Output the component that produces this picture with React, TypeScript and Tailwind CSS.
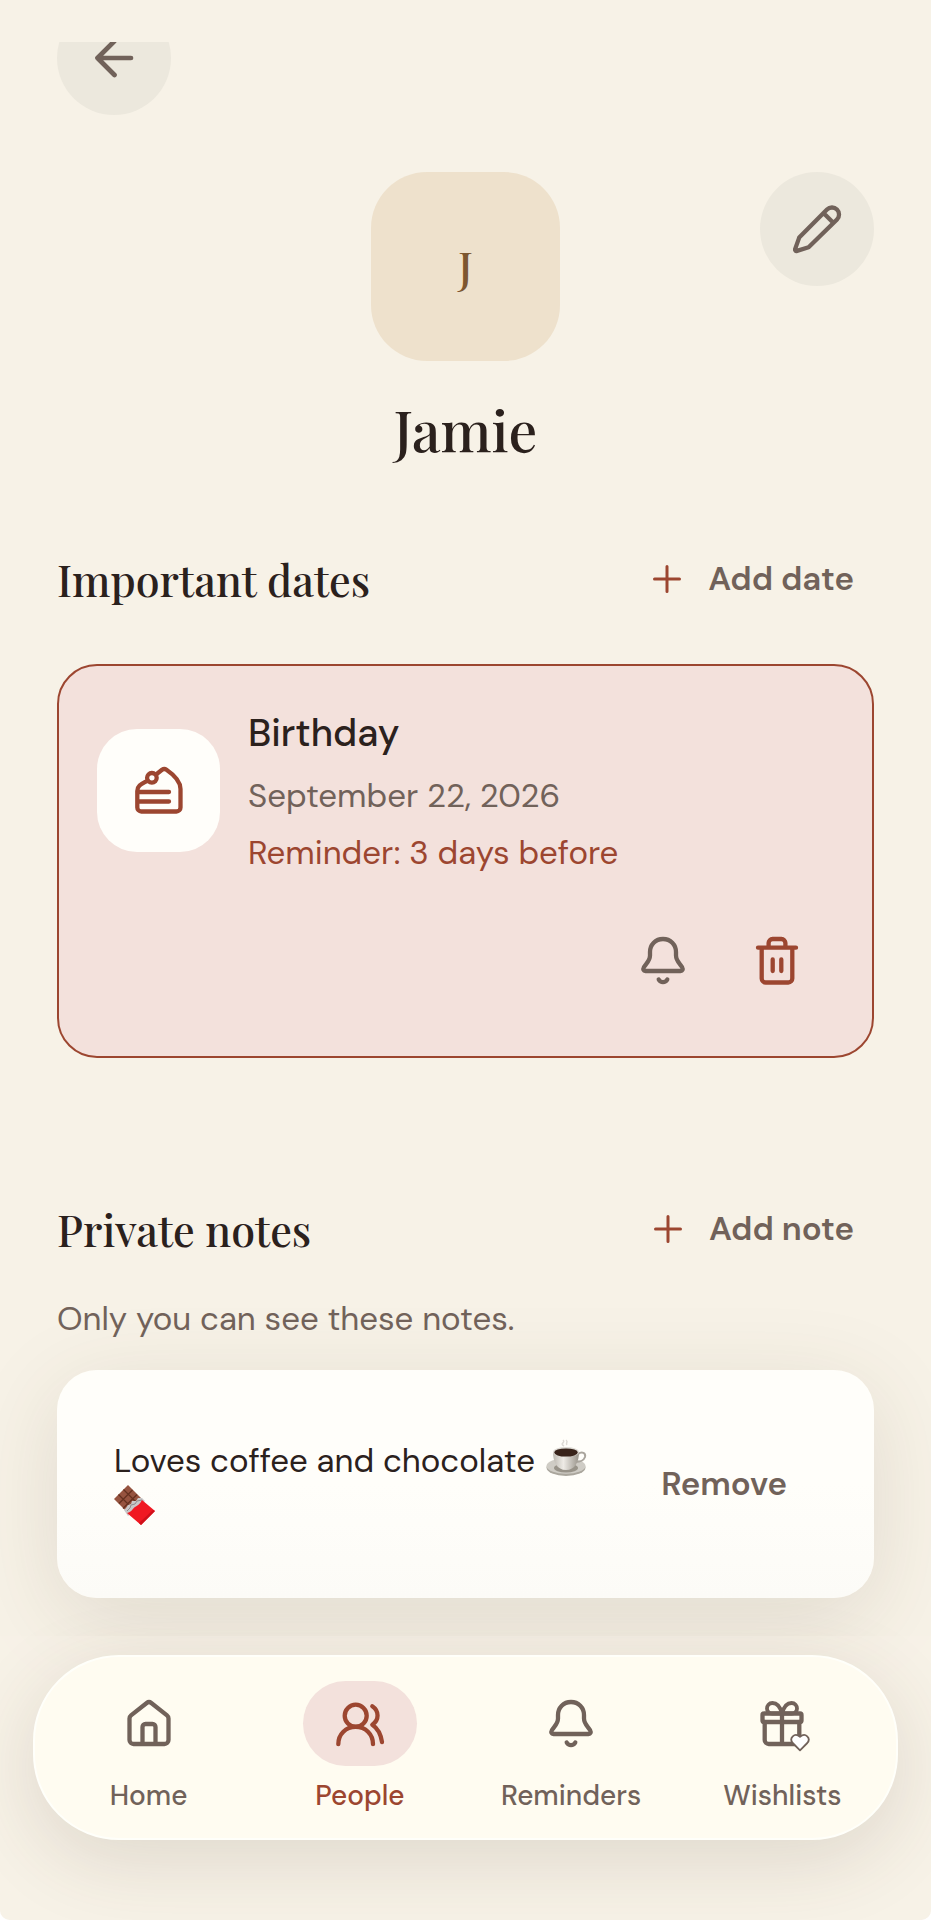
import { useState } from "react";
import type { ReactNode } from "react";

interface Note {
  id: number;
  text: string;
}

function Icon({ children }: { children: ReactNode }) {
  return (
    <svg
      viewBox="0 0 52 52"
      fill="none"
      stroke="currentColor"
      strokeWidth="4.3"
      strokeLinecap="round"
      strokeLinejoin="round"
      className="size-[52px] shrink-0 overflow-visible"
      aria-hidden="true"
    >
      {children}
    </svg>
  );
}

const BackIcon = () => (
  <Icon>
    <path d="M43 26H9.5M26.5 9 9.5 26l17 17" strokeWidth="4.7" />
  </Icon>
);

const PencilIcon = () => (
  <Icon>
    <path d="M8.2 34.6 36 6.6a7 7 0 0 1 10 9.9L17.6 44.2 6 47.9c-1.3.4-2.2-.5-1.9-1.8ZM33.5 11l8 8" />
  </Icon>
);

const CakeIcon = () => (
  <Icon>
    <path d="M14.6 16.6C9.5 19.6 4.3 21 4.3 27v16.5a4 4 0 0 0 4 4h35.2a4 4 0 0 0 4-4V25c0-8.5-7-14.5-14-19.3-1.5-1-3-1-4.5.1L23.1 10.5M5 28h31M5 37.5h31" />
    <circle cx="18.9" cy="13.8" r="4.8" />
  </Icon>
);

const BellIcon = () => (
  <Icon>
    <path d="M26 4C18.5 4 13 9.5 13 17v3.5C13 26 8.7 29 7 32c-1.3 2.5-.5 4 1.5 4h35c2 0 2.8-1.5 1.5-4-1.7-3-6-6-6-11.5V17C39 9.5 33.5 4 26 4ZM21.7 44.5c2 3.6 6.6 3.6 8.6 0" />
  </Icon>
);

const TrashIcon = () => (
  <Icon>
    <path d="M7 12.7h38M17.6 12.7V8a4 4 0 0 1 4-4h8.8a4 4 0 0 1 4 4v4.7M10.7 13v30.5a4 4 0 0 0 4 4h22.6a4 4 0 0 0 4-4V13M21.7 24.5V36M30.3 24.5V36" />
  </Icon>
);

const HomeIcon = () => (
  <Icon>
    <path d="M6.5 20.5V42a4 4 0 0 0 4 4h31a4 4 0 0 0 4-4V20.5c0-1.4-.4-2.2-1.5-3.1L28.3 5c-1.5-1.2-3.1-1.2-4.6 0L8 17.4c-1.1.9-1.5 1.7-1.5 3.1ZM19.5 45V29a3 3 0 0 1 3-3h7a3 3 0 0 1 3 3v16" />
  </Icon>
);

const PeopleIcon = () => (
  <Icon>
    <circle cx="21.7" cy="17.7" r="11" />
    <path d="M4.3 46.2C4.3 36 12 28.9 21.7 28.9S39 36 39 46.2M38.3 8.3c7 4.7 7 13.7 0 18.4 5 3.3 8.5 9.3 9.7 17.3" />
  </Icon>
);

const WishlistIcon = () => (
  <Icon>
    <path d="M8.7 24v18a4 4 0 0 0 4 4h26.6a4 4 0 0 0 4-4V24M26 16v30" />
    <rect x="6.5" y="15.5" width="39" height="8.5" rx="1.5" />
    <path
      d="M25.5 15.5h-9C12.5 15.5 11 13 11 10.5S13 5 16.5 5c5 0 8 5 9.5 10.5C27.5 10 30.5 5 35.5 5c3.5 0 5.5 3 5.5 5.5s-1.5 5-5.5 5h-9"
      strokeWidth="3.8"
    />
    <path
      d="M44 52.3 36.700 45c-4-5 1.800-10.800 7.300-6.300 5.500-4.500 11.300 1.300 7.300 6.300Z"
      fill="white"
      strokeWidth="1.8"
    />
  </Icon>
);

function CoffeeEmoji() {
  return (
    <svg viewBox="0 0 41 41" role="img" aria-label="coffee" className="mx-0.5 inline size-[41px] align-top">
      <defs>
        <linearGradient id="cup" x1="0" x2="1">
          <stop offset="0" stopColor="#bdb9b1" />
          <stop offset=".4" stopColor="#eeebe6" />
          <stop offset="1" stopColor="#99948b" />
        </linearGradient>
      </defs>
      <ellipse cx="20" cy="29.5" rx="19.5" ry="8.5" fill="#aaa69d" />
      <ellipse cx="20" cy="28" rx="19.5" ry="7.8" fill="#cfccc5" />
      <ellipse cx="20" cy="30" rx="12" ry="4.5" fill="#989389" />
      <path d="M32 16c4-3 8-1 7 3-1 3-5 5-9 5" fill="none" stroke="#aaa59d" strokeWidth="2" />
      <path d="M7 14c0 10 4 18 13 18s13-8 13-18Z" fill="url(#cup)" />
      <ellipse cx="20" cy="14" rx="13" ry="5" fill="#dedbd5" />
      <ellipse cx="20" cy="14.5" rx="11.8" ry="4.1" fill="#38231a" />
      <path d="M18 8c-5-3 2-3-1-6M21 7c-2-2 2-3-1-5" fill="none" stroke="#dddad5" strokeWidth="1.5" />
    </svg>
  );
}

function ChocolateEmoji() {
  return (
    <svg viewBox="0 0 41 41" role="img" aria-label="chocolate" className="inline size-[41px] align-top">
      <path d="M14 1 0 15l12 12 15-13Z" fill="#96533f" />
      <path d="m9.5 5.5 13 13M4.5 10.5l13 13M18.5 6 5 19.5M23 10.5 9 24.5" stroke="#64301f" strokeWidth="1.2" />
      <path d="m10 26 2-2 2-3 3-1 1-3 4 0 2-3 4 0 3 3-17 15Z" fill="#c9c7c8" />
      <path d="m13 27 3-3 1-3 4-1 2-3 5-1" fill="none" stroke="#8f8c8d" />
      <path d="M28 16 41 27 27 41 13 29c5-1 6-5 8-6s5-3 7-7Z" fill="#f01822" />
      <path d="m41 27-14 14-2-2 14-13Z" fill="#d0101a" />
    </svg>
  );
}

function SectionHeader({ title, action, onAction }: { title: string; action: string; onAction?: () => void }) {
  return (
    <div className="flex items-center justify-between">
      <h2 className="font-['Playfair_Display','Liberation_Serif',serif] text-[43px] leading-[56px] font-medium text-[#2b211d]">
        {title}
      </h2>
      <button
        type="button"
        onClick={onAction}
        className="flex h-[114px] items-center gap-[27px] pr-5 text-[33px] font-semibold text-[#71625a]"
      >
        <svg
          viewBox="0 0 28 28"
          className="size-7 text-[#9c4630]"
          fill="none"
          stroke="currentColor"
          strokeWidth="3"
          strokeLinecap="round"
          aria-hidden="true"
        >
          <path d="M14 1.5v25M1.5 14h25" />
        </svg>
        {action}
      </button>
    </div>
  );
}

const tabs = [
  { label: "Home", icon: <HomeIcon />, active: false },
  { label: "People", icon: <PeopleIcon />, active: true },
  { label: "Reminders", icon: <BellIcon />, active: false },
  { label: "Wishlists", icon: <WishlistIcon />, active: false },
];

export default function App() {
  const [notes, setNotes] = useState<Note[]>([{ id: 1, text: "Loves coffee and chocolate" }]);

  const removeNote = (id: number) => {
    setNotes((prev) => prev.filter((note) => note.id !== id));
  };

  return (
    <div className="flex min-h-screen flex-col overflow-hidden rounded-b-[10px] bg-[#f7f2e7] pt-[42px] font-['DM_Sans',Inter,sans-serif] [font-optical-sizing:none]">
      {/* Back button, partly scrolled under the status bar */}
      <header className="flex h-[73px] items-end overflow-hidden px-[57px]">
        <button
          type="button"
          aria-label="Back"
          className="flex size-[114px] shrink-0 items-center justify-center rounded-full bg-[#ece8dd] text-[#71625a]"
        >
          <BackIcon />
        </button>
      </header>

      <main className="px-[57px] pt-[57px]">
        {/* Profile */}
        <div className="grid grid-cols-3 items-start">
          <div className="col-start-2 flex size-[189px] items-center justify-center justify-self-center rounded-[56px] bg-[#eee1cc] font-['Playfair_Display','Liberation_Serif',serif] text-[43px] font-medium text-[#7d5730]">
            J
          </div>
          <button
            type="button"
            aria-label="Edit"
            className="flex size-[114px] items-center justify-center justify-self-end rounded-full bg-[#ece8dd] text-[#71625a]"
          >
            <PencilIcon />
          </button>
        </div>
        <h1 className="mt-8 text-center font-['Playfair_Display','Liberation_Serif',serif] text-[57px] leading-[72px] font-medium text-[#2b211d]">
          Jamie
        </h1>

        {/* Important dates */}
        <section className="mt-[57px]">
          <SectionHeader title="Important dates" action="Add date" />
          <article className="mt-7 rounded-[40px] border-2 border-[#9c4630] bg-[#f3e1dc] px-[38px] pt-[34px] pb-[38px]">
            <div className="flex items-center gap-7">
              <div className="flex size-[123px] shrink-0 items-center justify-center rounded-[40px] bg-[#fffefa] text-[#9c4630]">
                <CakeIcon />
              </div>
              <div>
                <h3 className="text-[38px] leading-[66px] font-medium text-[#2b211d]">Birthday</h3>
                <p className="text-[33px] leading-[60px] text-[#71625a]">September 22, 2026</p>
                <p className="text-[33px] leading-[54px] text-[#9c4630]">Reminder: 3 days before</p>
              </div>
            </div>
            <div className="mt-6 flex justify-end">
              <button type="button" aria-label="Edit reminder" className="flex size-[114px] items-center justify-center text-[#71625a]">
                <BellIcon />
              </button>
              <button type="button" aria-label="Delete date" className="flex size-[114px] items-center justify-center text-[#9c4630]">
                <TrashIcon />
              </button>
            </div>
          </article>
        </section>

        {/* Private notes */}
        <section className="mt-[114px]">
          <SectionHeader title="Private notes" action="Add note" />
          <p className="mt-2.5 text-[33px] leading-[46px] text-[#71625a]">Only you can see these notes.</p>
          {notes.map((note) => (
            <article
              key={note.id}
              className="mt-7 flex items-center rounded-[40px] bg-linear-to-b from-[#fffefa] from-50% to-[#fcfbf7] p-[57px] shadow-[0_20px_90px_rgba(75,60,40,0.13)]"
            >
              <p className="flex-1 text-[33px] leading-[46px] text-[#2b211d]">
                {note.text} <CoffeeEmoji /> <ChocolateEmoji />
              </p>
              <button
                type="button"
                onClick={() => removeNote(note.id)}
                className="h-[114px] px-[30px] text-[33px] font-semibold text-[#71625a]"
              >
                Remove
              </button>
            </article>
          ))}
        </section>
      </main>

      {/* Tab bar */}
      <footer className="mt-auto bg-[#f7f2e7]/50 px-[33px] pt-[19px] pb-20">
        <nav className="grid grid-cols-4 rounded-[86px] border-2 border-[#fffffa] bg-[#fffcf1] px-2 pt-6 pb-[22px] shadow-[0_20px_80px_rgba(75,60,40,0.14)]">
          {tabs.map((tab) => (
            <a
              key={tab.label}
              href="#"
              aria-current={tab.active ? "page" : undefined}
              className={`flex flex-col items-center gap-2.5 ${tab.active ? "text-[#9c4630]" : "text-[#71625a]"}`}
            >
              <span className={`flex h-[85px] w-[114px] items-center justify-center rounded-full ${tab.active ? "bg-[#f3e1dc]" : ""}`}>
                {tab.icon}
              </span>
              <span className="text-[28px] leading-[40px] font-medium">{tab.label}</span>
            </a>
          ))}
        </nav>
      </footer>
    </div>
  );
}
